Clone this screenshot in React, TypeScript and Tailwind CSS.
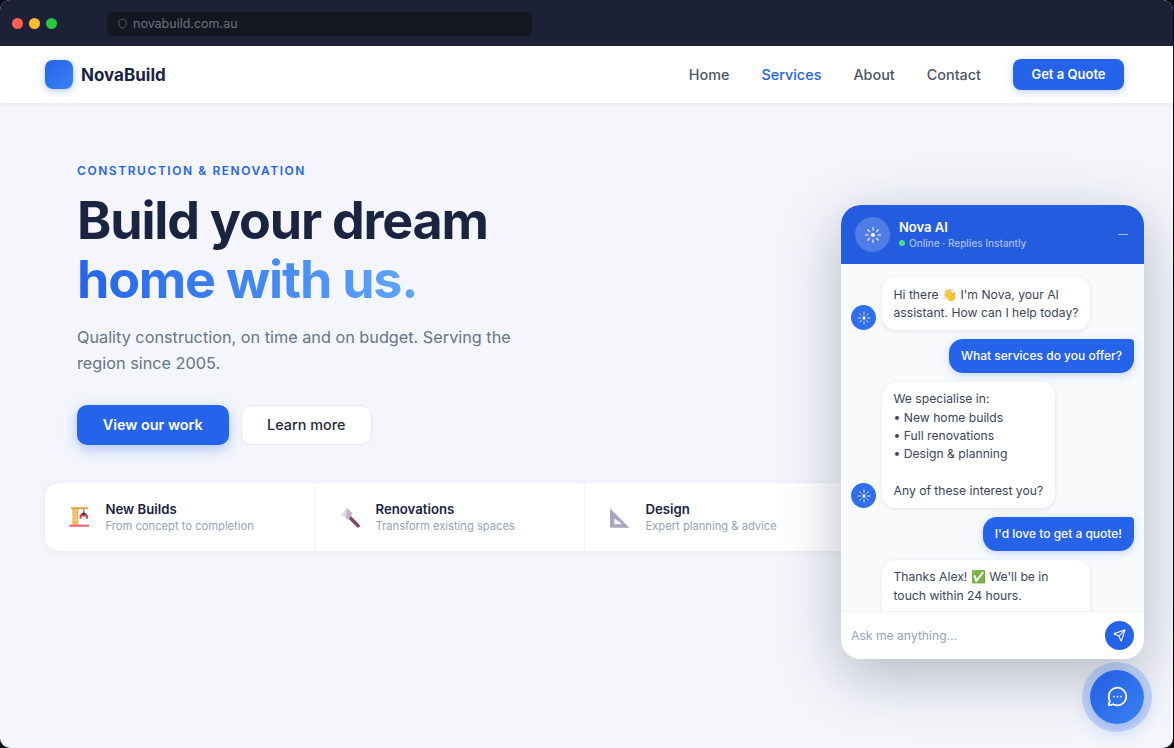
import React from 'react';
import { MessageCircleMore, Send, Shield } from 'lucide-react';

const navLinks = ['Home', 'Services', 'About', 'Contact'];

const CraneIcon = () => (
  <svg width="21" height="22" viewBox="0 0 21 22">
    <rect x="2" y="1.3" width="17.3" height="1.8" fill="#e0a03c" />
    <rect x="3.3" y="3" width="6" height="15" fill="#eab95a" />
    <path d="M4.5 5h3.5M4.5 8h3.5M4.5 11h3.5M4.5 14h3.5" stroke="#fbeecb" strokeWidth="1" strokeDasharray="1 1" />
    <path d="M14.8 3v4" stroke="#6b5b6b" strokeWidth="1" />
    <path d="M10.6 12.8V9.5l2-2.5h4.4l2 2.5v3.3h-2v-2.3h-4.4v2.3z" fill="#d8424f" />
    <rect x="13.6" y="6.4" width="2.4" height="3" fill="#3f3a4a" />
    <rect x="3" y="18" width="6.6" height="0.8" fill="#eab95a" />
    <rect x="0.3" y="18.6" width="19.7" height="2.2" fill="#f0647a" />
  </svg>
);

const HammerIcon = () => (
  <svg width="21" height="21" viewBox="0 0 21 21">
    <path d="M9 8.5 19 18.8" stroke="#84466a" strokeWidth="3.6" strokeLinecap="round" />
    <path d="M1.3 9 8 1.3l5.7 5-5 6.7-3-3.4z" fill="#dfdae3" />
    <path d="M8 1.3l5.7 5-5 6.7-2.2-2.6z" fill="#bfb8c9" />
  </svg>
);

const SetSquareIcon = () => (
  <svg width="21" height="21" viewBox="0 0 21 21">
    <path d="M1 1.3 20.3 20.7H1z" fill="#a9a5bd" />
    <path d="M5.3 11.3 13.7 17.3H5.3z" fill="#f5f4f8" />
  </svg>
);

const features = [
  { icon: <CraneIcon />, title: 'New Builds', text: 'From concept to completion' },
  { icon: <HammerIcon />, title: 'Renovations', text: 'Transform existing spaces' },
  { icon: <SetSquareIcon />, title: 'Design', text: 'Expert planning & advice' },
];

const Spark = ({ size }: { size: number }) => (
  <svg width={size} height={size} viewBox="0 0 24 24" fill="none" stroke="white" strokeWidth="1.5" strokeLinecap="round">
    <circle cx="12" cy="12" r="2.8" fill="white" stroke="none" />
    <path d="M12 2v3.5M12 18.5V22M2 12h3.5M18.5 12H22M5 5l2.4 2.4M16.6 16.6 19 19M5 19l2.4-2.4M16.6 7.4 19 5" />
  </svg>
);

const BotBubble = ({ children }: { children: React.ReactNode }) => (
  <div className="flex items-end gap-[6px] shrink-0">
    <div className="w-[25px] h-[25px] shrink-0 rounded-full bg-[#2f6fed] flex items-center justify-center">
      <Spark size={14} />
    </div>
    <div className="bg-white rounded-[14px] pl-[11.5px] pr-3 py-[8.5px] text-[12.16px] leading-[1.5] text-[#3b4456] shadow-[0_1px_4px_rgba(15,23,42,0.1)]">
      {children}
    </div>
  </div>
);

const UserBubble = ({ children }: { children: React.ReactNode }) => (
  <div className="flex justify-end shrink-0 mb-[0.5px]">
    <div className="bg-[#2563eb] rounded-[14px] rounded-tr-[4px] px-3 py-2 text-[12px] leading-[1.5] font-medium text-white shadow-[0_2px_8px_rgba(37,99,235,0.25)]">
      {children}
    </div>
  </div>
);

export default function App() {
  return (
    <div className="relative w-[1174px] h-[748px] overflow-hidden bg-[#0b0d14] font-['Inter',sans-serif]">
      <div className="h-full flex flex-col rounded-[10px] overflow-hidden mr-px bg-[#f4f6fb]">
        <div className="h-[46px] shrink-0 bg-[#1c2135] flex items-center pl-3">
          <div className="flex items-center gap-[6px]">
            <span className="w-[11px] h-[11px] rounded-full bg-[#ff5f57]" />
            <span className="w-[11px] h-[11px] rounded-full bg-[#febc2e]" />
            <span className="w-[11px] h-[11px] rounded-full bg-[#28c840]" />
          </div>
          <div className="ml-[49px] mt-px w-[427px] h-[26px] rounded-[7px] bg-[#141722] border border-[#1f2435] flex items-center gap-[5px] px-[10px] text-[12.5px] text-[#6b7280]">
            <Shield size={11} strokeWidth={1.6} />
            <span className="pt-px">novabuild.com.au</span>
          </div>
        </div>

        <nav className="h-[57px] shrink-0 bg-white flex items-center justify-between pl-[45px] pr-[49px] shadow-[0_1px_3px_rgba(15,23,42,0.07)] relative">
          <div className="flex items-center gap-2">
            <div className="w-[28px] h-[29px] rounded-[8px] bg-gradient-to-br from-[#2563eb] to-[#3b82f6] shadow-[0_2px_8px_rgba(37,99,235,0.35)]" />
            <span className="pt-[2px] text-[17px] font-bold text-[#1a2340]">NovaBuild</span>
          </div>
          <div className="flex items-center gap-8">
            {navLinks.map((link) => (
              <a key={link} className={`text-[14.4px] font-medium ${link === 'Services' ? 'text-[#2563eb]' : 'text-[#4b5563]'}`}>
                {link}
              </a>
            ))}
            <button className="h-[31px] w-[111px] rounded-[8px] bg-[#2563eb] text-white text-[13px] font-semibold shadow-[0_2px_8px_rgba(37,99,235,0.3)]">
              Get a Quote
            </button>
          </div>
        </nav>

        <main className="flex-1 pl-[45px] pt-[60px]">
          <div className="pl-8">
            <p className="text-[12px] leading-[15px] font-semibold tracking-[1.56px] text-[#2563eb]">CONSTRUCTION &amp; RENOVATION</p>
            <h1 className="mt-[13px] text-[52px] leading-[59px] font-bold tracking-[-1.2px] text-[#1a2340]">
              Build your dream
              <br />
              <span className="bg-gradient-to-r from-[#2563eb] to-[#60a5fa] bg-clip-text text-transparent">home with us.</span>
            </h1>
            <p className="mt-[15px] w-[460px] text-[16.25px] leading-[26px] text-[#64748b]">
              Quality construction, on time and on budget. Serving the region since 2005.
            </p>
            <div className="mt-[29px] flex items-center gap-3">
              <button className="w-[151.5px] h-[40px] rounded-[10px] bg-[#2563eb] text-white text-[14.4px] font-semibold shadow-[0_4px_14px_rgba(37,99,235,0.35)]">
                View our work
              </button>
              <button className="w-[131.5px] h-[40px] rounded-[10px] bg-white border border-[#e5e7eb] text-[#1f2937] text-[14.4px] font-medium">
                Learn more
              </button>
            </div>
          </div>

          <div className="mt-[38px] w-[810px] h-[68px] bg-white rounded-[14px] flex shadow-[0_1px_6px_rgba(15,23,42,0.06)]">
            {features.map((f, i) => (
              <div key={f.title} className={`w-[270px] flex items-center gap-4 pl-[23.5px] ${i < 2 ? 'border-r border-[#f1f3f7]' : ''}`}>
                <span className="w-[21px] shrink-0">{f.icon}</span>
                <div>
                  <div className="text-[13.2px] leading-[17px] font-semibold text-[#1a2340]">{f.title}</div>
                  <div className="text-[11.2px] leading-[16px] text-[#94a3b8]">{f.text}</div>
                </div>
              </div>
            ))}
          </div>
        </main>
      </div>

      {/* chat widget */}
      <div className="absolute left-[841px] top-[205px] w-[303px] h-[454px] rounded-[20px] overflow-hidden bg-[#f8fafc] flex flex-col shadow-[0_16px_60px_rgba(26,35,64,0.3)]">
        <div className="h-[59px] shrink-0 bg-[#245ce0] flex items-center pl-[14px] pr-4">
          <div className="w-[35px] h-[35px] rounded-full bg-white/20 flex items-center justify-center">
            <Spark size={18} />
          </div>
          <div className="ml-[9px] flex-1">
            <div className="text-[13px] leading-[17px] font-semibold text-white">Nova AI</div>
            <div className="flex items-center gap-[4px] text-[10px] leading-[14px] font-medium text-[#a9bef2]">
              <span className="w-[6px] h-[6px] rounded-full bg-[#4ade80]" />
              Online · Replies Instantly
            </div>
          </div>
          <span className="w-[10px] h-[1.5px] bg-white/60" />
        </div>

        <div className="flex-1 min-h-0 overflow-hidden flex flex-col gap-[8.5px] pt-[13px] px-[10px]">
          <BotBubble>
            Hi there 👋 I'm Nova, your AI
            <br />
            assistant. How can I help today?
          </BotBubble>
          <UserBubble>What services do you offer?</UserBubble>
          <BotBubble>
            We specialise in:
            <br />• New home builds
            <br />• Full renovations
            <br />• Design &amp; planning
            <br />
            <br />
            Any of these interest you?
          </BotBubble>
          <UserBubble>I'd love to get a quote!</UserBubble>
          <div className="pl-[31px] shrink-0">
            <div className="w-[208px] bg-white rounded-[14px] pl-[11.5px] pr-3 py-[8.5px] text-[12.16px] leading-[1.5] text-[#3b4456] shadow-[0_1px_4px_rgba(15,23,42,0.1)]">
              Thanks Alex! ✅ We'll be in
              <br />
              touch within 24 hours.
              <div className="mt-[6px] ml-1 w-[77px] h-[20px] rounded-[6px] bg-[#eff4ff] border border-[#dbe6fe]" />
            </div>
          </div>
        </div>

        <div className="h-[48px] shrink-0 bg-white border-t border-[#f1f3f7] flex items-center justify-between px-[10px]">
          <span className="pt-px text-[12.16px] text-[#94a3b8]">Ask me anything...</span>
          <div className="w-[29px] h-[29px] rounded-full bg-[#2563eb] flex items-center justify-center">
            <Send size={13} color="white" />
          </div>
        </div>
      </div>

      <div className="absolute left-[1090px] top-[669.5px] w-[54px] h-[54px] rounded-full bg-gradient-to-br from-[#245ce0] to-[#3b82f6] flex items-center justify-center shadow-[0_0_0_8px_rgba(37,99,235,0.2),0_6px_20px_rgba(37,99,235,0.3)]">
        <MessageCircleMore size={21} color="white" />
      </div>
    </div>
  );
}
